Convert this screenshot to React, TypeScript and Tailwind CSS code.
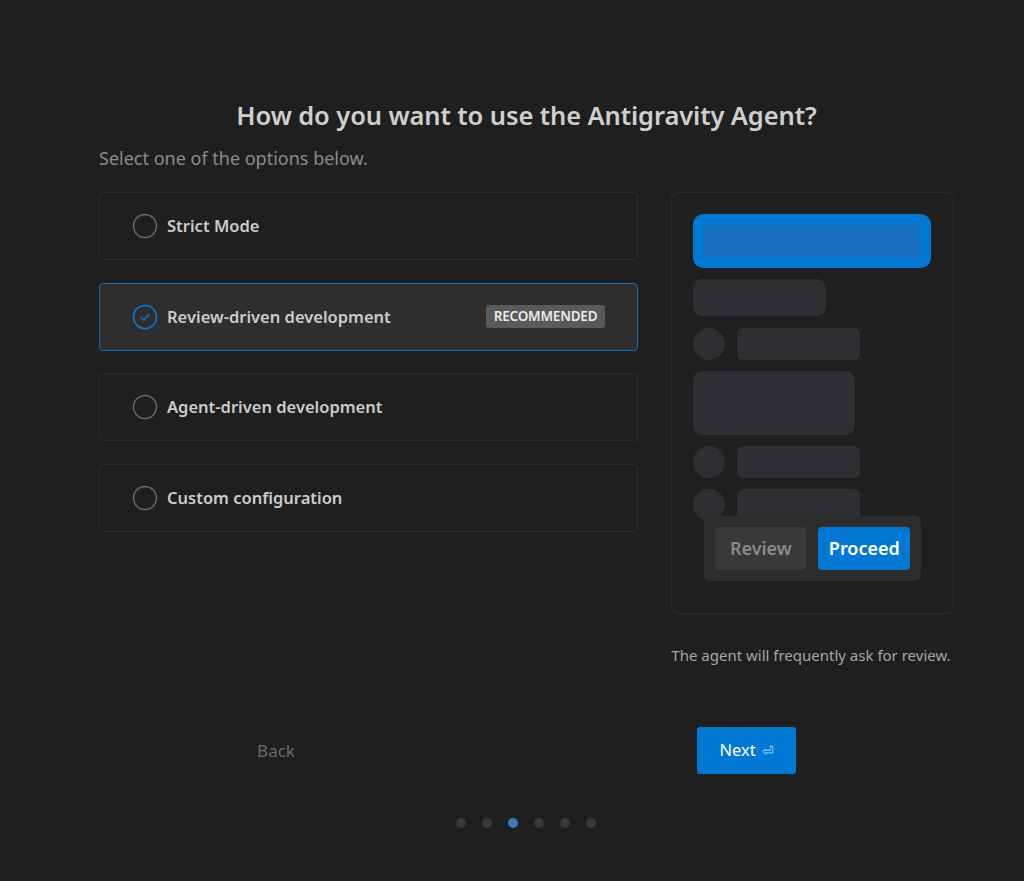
import React from "react";

const font = { fontFamily: '"Noto Sans", "Open Sans", sans-serif' };

function Radio({ checked }: { checked?: boolean }) {
  if (checked) {
    return (
      <svg width="26" height="26" viewBox="0 0 26 26" className="shrink-0">
        <circle cx="13" cy="13" r="11.5" fill="none" stroke="#0a78d4" strokeWidth="1.6" />
        <path d="M8.8 13.2 L11.7 16 L17.2 10.4" fill="none" stroke="#0a78d4" strokeWidth="1.4" strokeLinecap="round" strokeLinejoin="round" />
      </svg>
    );
  }
  return (
    <svg width="26" height="26" viewBox="0 0 26 26" className="shrink-0">
      <circle cx="13" cy="13" r="11.5" fill="none" stroke="#6b6b6b" strokeWidth="1.4" />
    </svg>
  );
}

function Option({ label, checked, badge }: { label: string; checked?: boolean; badge?: boolean }) {
  return (
    <div
      className={
        "h-[68px] rounded-[4px] border flex items-center pl-[32px] pr-[32px] gap-[9px] " +
        (checked ? "border-[#0a6fc4] bg-[#2e2e2e]" : "border-[#2c2c2c] bg-[#1f1f1f]")
      }
    >
      <Radio checked={checked} />
      <span className="text-[16.5px] font-semibold text-[#cccccc] flex-1 pt-[1px]">{label}</span>
      {badge && (
        <span className="bg-[#5a5a5a] text-[#ececec] text-[13.5px] font-semibold rounded-[3px] h-[23px] px-[8px] flex items-center tracking-[-0.2px]">
          RECOMMENDED
        </span>
      )}
    </div>
  );
}

function RowCircle() {
  return (
    <div className="flex items-center gap-[12px]">
      <div className="w-[32px] h-[32px] rounded-full bg-[#2e2f33]" />
      <div className="w-[123px] h-[32px] rounded-[6px] bg-[#2e2f33]" />
    </div>
  );
}

export default function App() {
  return (
    <div className="min-h-[881px] w-full bg-[#1f1f1f] text-[#cccccc]" style={font}>
      <div className="ml-[99px] w-[855px] pt-[98px] flex flex-col">
        <h1 className="text-center text-[25.5px] font-semibold text-[#cfcfcf] leading-[34px] tracking-[-0.1px]">
          How do you want to use the Antigravity Agent?
        </h1>
        <p className="mt-[14px] text-[18px] text-[#8b8b8b] leading-[24px]">Select one of the options below.</p>
        <div className="mt-[22px] flex gap-[33px]">
          <div className="w-[540px] flex flex-col gap-[22.5px]">
            <Option label="Strict Mode" />
            <Option label="Review-driven development" checked badge />
            <Option label="Agent-driven development" />
            <Option label="Custom configuration" />
          </div>
          <div className="w-[283px] flex flex-col">
            <div className="relative h-[422px] rounded-[7px] border border-[#2c2c2c] pt-[21px] pl-[21px]">
              <div className="w-[238px] h-[54px] rounded-[10px] bg-[#0078d4] p-[11px]">
                <div className="w-full h-full rounded-[4px] bg-[#1a70c0]" />
              </div>
              <div className="mt-[11px] w-[133px] h-[37px] rounded-[9px] bg-[#2e2f33]" />
              <div className="mt-[12px]"><RowCircle /></div>
              <div className="mt-[11px] w-[162px] h-[64px] rounded-[9px] bg-[#2e2f33]" />
              <div className="mt-[11px]"><RowCircle /></div>
              <div className="mt-[11px]"><RowCircle /></div>
              <div className="absolute left-[32px] top-[323px] w-[217px] h-[65px] rounded-[6px] bg-[#2d2d2d] flex items-center gap-[12px] px-[11px]">
                <div className="w-[91px] h-[43px] rounded-[4px] bg-[#393939] flex items-center justify-center text-[18px] font-semibold text-[#8a8a8a]">
                  Review
                </div>
                <div className="w-[92px] h-[43px] rounded-[4px] bg-[#0078d4] flex items-center justify-center text-[18px] font-semibold text-white">
                  Proceed
                </div>
              </div>
            </div>
            <p className="mt-[30px] text-[15px] text-[#a6a6a6] leading-[22px] whitespace-nowrap">
              The agent will frequently ask for review.
            </p>
          </div>
        </div>
      </div>
      <div className="mt-[61px] flex ml-[227px] items-center">
        <button className="w-[98px] h-[46px] text-[17px] text-[#6b6b6b] flex items-center justify-center">Back</button>
        <button className="ml-[372px] w-[99px] h-[47px] rounded-[3px] bg-[#0078d4] text-white text-[16.5px] flex items-center justify-center gap-[6px]">
          Next <span className="text-[14px] text-[#b9d8f3]">⏎</span>
        </button>
      </div>
      <div className="mt-[44px] ml-[456px] flex gap-[16px]">
        <div className="w-[10px] h-[10px] rounded-full bg-[#3a3a3a]" />
        <div className="w-[10px] h-[10px] rounded-full bg-[#3a3a3a]" />
        <div className="w-[10px] h-[10px] rounded-full bg-[#3c7ab8]" />
        <div className="w-[10px] h-[10px] rounded-full bg-[#3a3a3a]" />
        <div className="w-[10px] h-[10px] rounded-full bg-[#3a3a3a]" />
        <div className="w-[10px] h-[10px] rounded-full bg-[#3a3a3a]" />
      </div>
    </div>
  );
}
